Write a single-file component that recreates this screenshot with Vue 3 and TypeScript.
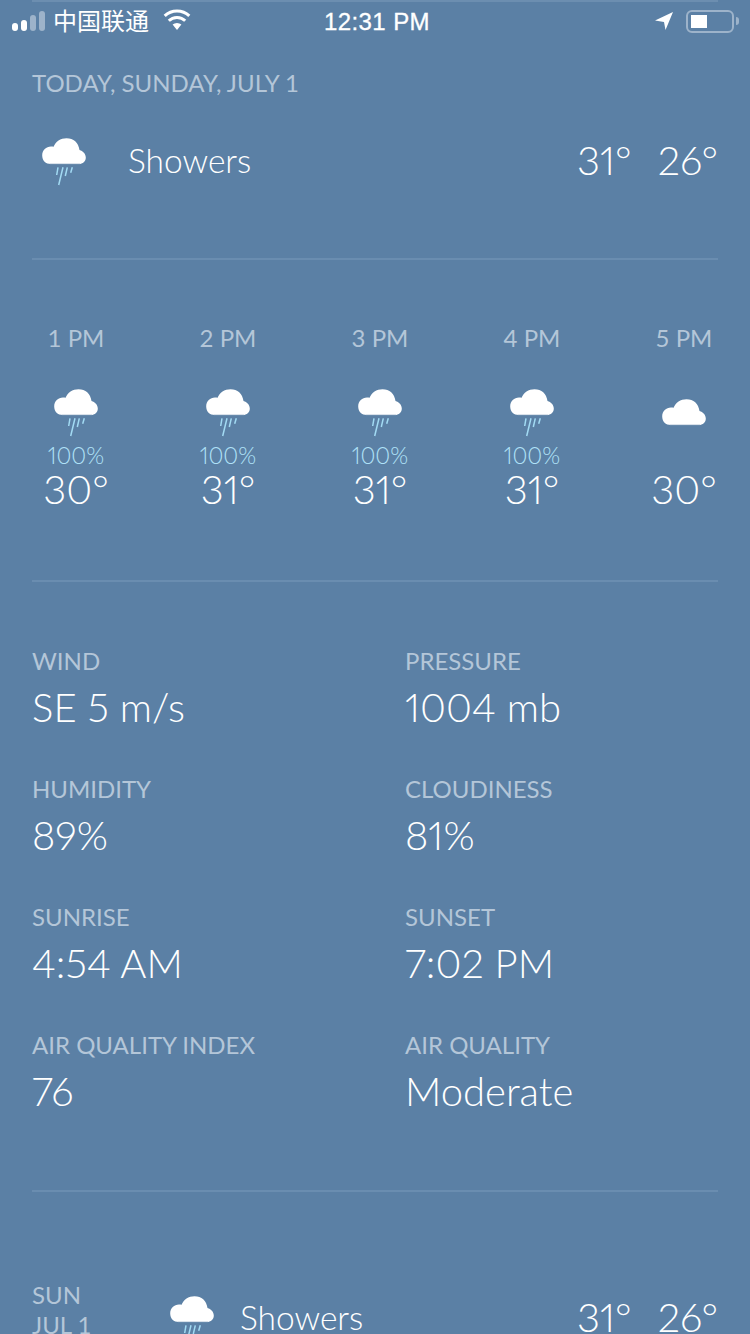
<script setup lang="ts">
interface Hour { time: string; rain: boolean; chance: string; temp: string }
const hours: Hour[] = [
  { time: '1 PM', rain: true, chance: '100%', temp: '30°' },
  { time: '2 PM', rain: true, chance: '100%', temp: '31°' },
  { time: '3 PM', rain: true, chance: '100%', temp: '31°' },
  { time: '4 PM', rain: true, chance: '100%', temp: '31°' },
  { time: '5 PM', rain: false, chance: '', temp: '30°' }
]
const details = [
  { label: 'WIND', value: 'SE 5 m/s' },
  { label: 'PRESSURE', value: '1004 mb' },
  { label: 'HUMIDITY', value: '89%' },
  { label: 'CLOUDINESS', value: '81%' },
  { label: 'SUNRISE', value: '4:54 AM' },
  { label: 'SUNSET', value: '7:02 PM' },
  { label: 'AIR QUALITY INDEX', value: '76' },
  { label: 'AIR QUALITY', value: 'Moderate' }
]
</script>

<template>
  <div class="page">
    <svg class="defs" width="0" height="0" aria-hidden="true">
      <symbol id="cloud" viewBox="0 0 44 48">
        <path d="M9 26C3.6 26 .2 22.500 .2 17.500 .2 12.200 4.200 8.500 9 8.500c1 0 2 .1 2.600.3C13.600 3.500 18.500 .2 24.500 .2c7 0 12 4.400 13 11.800 3.500 1 6.300 4 6.300 7.500 0 4-3 6.500-7 6.500Z" fill="#fff" />
        <path d="M8 25.600H38" stroke="#d5dee8" stroke-width="1" />
      </symbol>
      <symbol id="rain" viewBox="0 0 44 48">
        <path d="M16 29.300 14.700 37M21 29.300 16.700 47M25.300 29.300 23.300 38M30.300 29.300 28.700 34.700" stroke="#a2daf3" stroke-width="1.500" fill="none" />
      </symbol>
    </svg>

    <div class="rule-top"></div>
    <header class="status">
      <div class="status-left">
        <span class="bars"><i class="b1"></i><i class="b2"></i><i class="b3"></i><i class="b4"></i></span>
        <span class="carrier">中国联通</span>
        <svg class="wifi" width="28" height="21" viewBox="0 0 28 21">
          <path d="M14 21 9.600 15.600a6.500 6.500 0 0 1 8.800 0Z" fill="#fff" />
          <path d="M5.800 11.800a11.600 11.600 0 0 1 16.400 0" stroke="#fff" stroke-width="3" fill="none" />
          <path d="M1.700 6.900a17.600 17.600 0 0 1 24.600 0" stroke="#fff" stroke-width="3" fill="none" />
        </svg>
      </div>
      <div class="clock">12:31 PM</div>
      <div class="status-right">
        <svg width="18" height="18" viewBox="0 0 18 18"><path d="M18 0 0 8.500 9 10 10.500 18Z" fill="#fff" /></svg>
        <span class="battery"><i></i></span>
        <span class="nub"></span>
      </div>
    </header>

    <section class="today">
      <div class="label">TODAY, SUNDAY, JULY 1</div>
      <div class="today-row">
        <svg class="icon" width="44" height="48"><use href="#cloud" /><use href="#rain" /></svg>
        <span class="cond first">Showers</span>
        <span class="temps"><span>31°</span><span>26°</span></span>
      </div>
    </section>
    <div class="rule"></div>

    <section class="hours">
      <div v-for="h in hours" :key="h.time" class="hour">
        <div class="label hour-time">{{ h.time }}</div>
        <svg class="icon hour-icon" width="44" height="48"><use href="#cloud" v-if="h.rain" /><use href="#rain" v-if="h.rain" /><use href="#cloud" v-else y="10" /></svg>
        <div class="chance">{{ h.chance }}</div>
        <div class="hour-temp">{{ h.temp }}</div>
      </div>
    </section>
    <div class="rule"></div>

    <section class="details">
      <div v-for="d in details" :key="d.label" class="detail">
        <div class="label">{{ d.label }}</div>
        <div class="value">{{ d.value }}</div>
      </div>
    </section>
    <div class="rule"></div>

    <section class="forecast">
      <div class="day label"><div>SUN</div><div>JUL 1</div></div>
      <svg class="icon fc-icon" width="44" height="48"><use href="#cloud" /><use href="#rain" /></svg>
      <span class="cond second">Showers</span>
      <span class="temps"><span>31°</span><span>26°</span></span>
    </section>
  </div>
</template>

<style scoped>
.page {
  width: 750px;
  height: 1334px;
  overflow: hidden;
  background: #5b80a5;
  color: #fff;
  font-family: Lato, "Noto Sans CJK SC", sans-serif;
  font-weight: 300;
  font-variant-numeric: proportional-nums;
}
.defs { display: block; }
.rule-top { height: 2px; margin: 0 32px; background: #6c8eb0; }
.rule { height: 2px; margin: 0 32px; background: #6a8db0; }

.status { height: 38px; padding: 0 11px 0 12px; display: grid; grid-template-columns: 1fr auto 1fr; align-items: center; }
.status-left { display: flex; align-items: center; }
.bars { display: flex; align-items: flex-end; gap: 3px; height: 20px; }
.bars i { display: block; width: 6px; border-radius: 3px; background: #fff; }
.bars .b1 { height: 8px; }
.bars .b2 { height: 11px; }
.bars .b3 { height: 16px; background: #9db3ca; }
.bars .b4 { height: 20px; background: #9db3ca; }
.carrier { margin: -3px 0 0 8px; font-family: "Noto Sans CJK SC", sans-serif; font-size: 24px; font-weight: 400; line-height: 30px; }
.wifi { margin: -3px 0 0 14px; }
.clock { font-family: "Liberation Sans", sans-serif; font-size: 24px; font-weight: 400; letter-spacing: .4px; -webkit-text-stroke: .3px #fff; margin: 2px 0 0 3px; }
.status-right { display: flex; align-items: center; justify-content: flex-end; }
.battery { margin-left: 13px; display: block; width: 48px; height: 23px; box-sizing: border-box; border: 2px solid #9db3ca; border-radius: 6px; padding: 3px; }
.battery i { display: block; width: 16px; height: 13px; background: #fff; }
.nub { display: block; width: 3px; height: 8px; margin-left: 2px; background: #9db3ca; border-radius: 0 3px 3px 0; }

.label { font-size: 24px; line-height: 30px; color: #b4c6d8; font-weight: 400; font-variant-numeric: normal; }
.today { height: 218px; padding: 28px 32px 0; box-sizing: border-box; }
.today-row { display: flex; align-items: flex-start; margin-top: 40px; padding-left: 10px; }
.cond { font-size: 33.500px; line-height: 44px; }
.first { margin-left: 42px; }
.temps { margin-left: auto; display: flex; gap: 26px; font-size: 40px; line-height: 44px; }

.hours { display: grid; grid-template-columns: repeat(5, 152px); height: 320px; padding-top: 63px; box-sizing: border-box; }
.hour { display: flex; flex-direction: column; align-items: center; }
.hour-icon { margin-top: 36px; }
.chance { height: 24px; margin-top: 6px; font-size: 23px; line-height: 24px; color: #b0e2f8; }
.hour-temp { font-size: 40px; line-height: 44px; }

.details { display: grid; grid-template-columns: 373px 1fr; grid-auto-rows: 128px; height: 608px; padding: 64px 32px 0; box-sizing: border-box; }
.value { font-size: 40px; line-height: 46px; margin-top: 8px; }

.forecast { display: flex; align-items: flex-start; padding: 88px 32px 0; }
.day { width: 138px; }
.fc-icon { margin-top: 16px; }
.second { margin: 15px 0 0 26px; }
.forecast .temps { margin-top: 15px; }
</style>
